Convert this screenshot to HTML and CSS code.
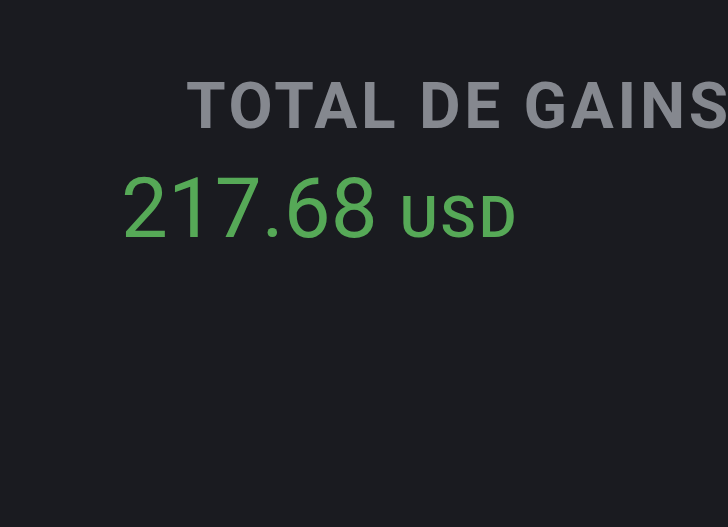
FILE: index.html
```html
<!DOCTYPE html>
<html lang="fr">
<head>
<meta charset="utf-8">
<link rel="stylesheet" href="styles.css">
</head>
<body>
<main class="earnings">
  <h1 class="earnings-title">TOTAL DE GAINS</h1>
  <div class="earnings-amount"><span class="earnings-value">217.68</span><span class="earnings-currency">USD</span></div>
</main>
</body>
</html>
```
FILE: styles.css
```css
html, body {
  margin: 0;
  padding: 0;
  background: #1a1b20;
  width: 728px;
  height: 527px;
  overflow: hidden;
}
.earnings {
  font-family: Roboto, "Liberation Sans", sans-serif;
  padding-top: 75px;
}
.earnings-title {
  margin: 0 0 28px 186px;
  font-size: 64px;
  line-height: 64px;
  font-weight: 700;
  letter-spacing: 3.7px;
  color: #85888f;
  white-space: nowrap;
}
.earnings-amount {
  margin-left: 121px;
  line-height: 83px;
  white-space: nowrap;
  color: #56a957;
}
.earnings-value {
  font-size: 83.5px;
  font-weight: 400;
}
.earnings-currency {
  font-size: 58px;
  font-weight: 500;
  letter-spacing: 3px;
  margin-left: 22px;
}
```
